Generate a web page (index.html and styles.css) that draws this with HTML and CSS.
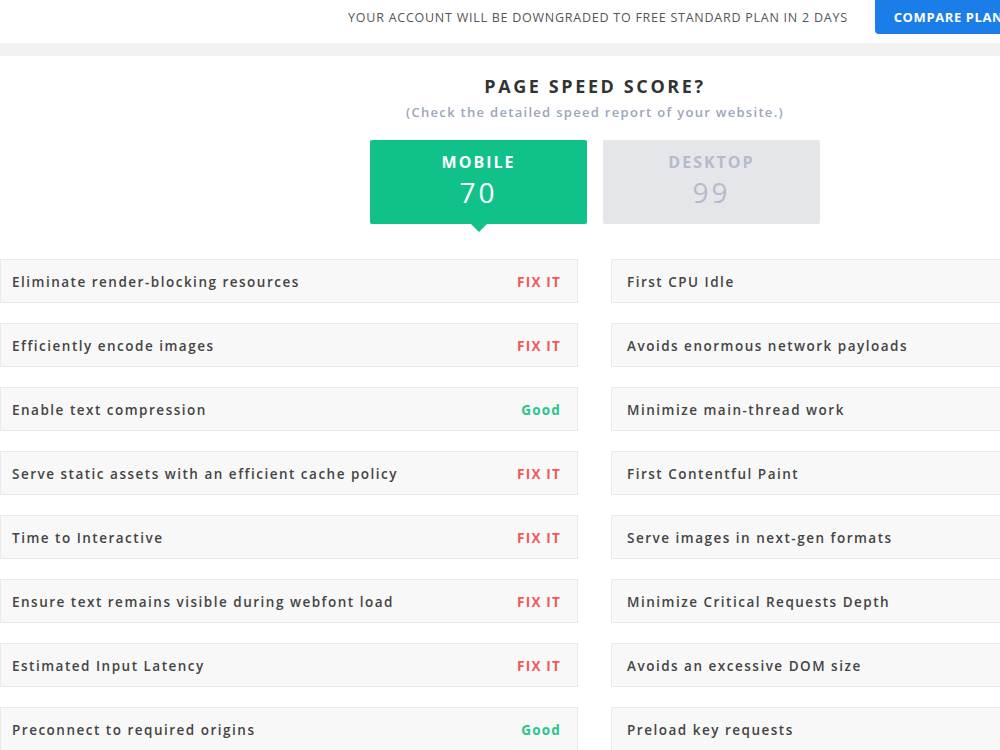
FILE: index.html
```html
<!DOCTYPE html>
<html>
<head>
    <title>Page Speed Score</title>
    <link rel="stylesheet" href="styles.css">
</head>
<body>
    <div class="page">
        <div class="topbar">
            <span class="notice">Your account will be downgraded to free standard plan in 2 days</span>
            <button class="compare-btn">Compare Plans</button>
        </div>

        <div class="panel">
            <h1>Page Speed Score?</h1>
            <p class="subtitle">(Check the detailed speed report of your website.)</p>

            <div class="tabs">
                <div class="tab active">
                    <span class="tab-name">Mobile</span>
                    <span class="tab-score">70</span>
                </div>
                <div class="tab">
                    <span class="tab-name">Desktop</span>
                    <span class="tab-score">99</span>
                </div>
            </div>

            <div class="audits">
                <div class="audit"><span>Eliminate render-blocking resources</span><span class="fix">FIX IT</span></div>
                <div class="audit"><span>First CPU Idle</span></div>
                <div class="audit"><span>Efficiently encode images</span><span class="fix">FIX IT</span></div>
                <div class="audit"><span>Avoids enormous network payloads</span></div>
                <div class="audit"><span>Enable text compression</span><span class="good">Good</span></div>
                <div class="audit"><span>Minimize main-thread work</span></div>
                <div class="audit"><span>Serve static assets with an efficient cache policy</span><span class="fix">FIX IT</span></div>
                <div class="audit"><span>First Contentful Paint</span></div>
                <div class="audit"><span>Time to Interactive</span><span class="fix">FIX IT</span></div>
                <div class="audit"><span>Serve images in next-gen formats</span></div>
                <div class="audit"><span>Ensure text remains visible during webfont load</span><span class="fix">FIX IT</span></div>
                <div class="audit"><span>Minimize Critical Requests Depth</span></div>
                <div class="audit"><span>Estimated Input Latency</span><span class="fix">FIX IT</span></div>
                <div class="audit"><span>Avoids an excessive DOM size</span></div>
                <div class="audit"><span>Preconnect to required origins</span><span class="good">Good</span></div>
                <div class="audit"><span>Preload key requests</span></div>
            </div>
        </div>
    </div>
</body>
</html>
```

FILE: styles.css
```css
body {
    margin: 0;
    padding: 0;
    font-family: "Open Sans", Arial, sans-serif;
    background: #f2f2f2;
    overflow: hidden;
}

.page {
    width: 1190px;
}

.topbar {
    height: 43px;
    background: white;
    display: flex;
    justify-content: flex-end;
    align-items: flex-start;
    gap: 27px;
    padding-right: 160px;
}

.notice {
    margin-top: 9px;
    font-size: 12.5px;
    font-weight: 400;
    text-transform: uppercase;
    color: #555;
    letter-spacing: 0.75px;
}

.compare-btn {
    height: 34px;
    padding: 0 19px;
    background: #1a7de8;
    color: white;
    border: none;
    border-radius: 0 0 4px 4px;
    font-family: inherit;
    font-size: 13px;
    font-weight: 700;
    text-transform: uppercase;
    letter-spacing: 0.6px;
}

.panel {
    margin-top: 13px;
    background: white;
    padding: 18px 0 0;
    height: 700px;
}

h1 {
    margin: 0;
    text-align: center;
    font-size: 18px;
    font-weight: 700;
    text-transform: uppercase;
    letter-spacing: 2.6px;
    color: #333;
}

.subtitle {
    margin: 5px 0 0;
    text-align: center;
    font-size: 13px;
    font-weight: 600;
    color: #9ba6ba;
    letter-spacing: 1.3px;
}

.tabs {
    display: flex;
    justify-content: center;
    gap: 16px;
    margin-top: 19px;
}

.tab {
    position: relative;
    width: 217px;
    height: 84px;
    border-radius: 2px;
    background: #e4e6ea;
    color: #b5bbca;
    display: flex;
    flex-direction: column;
    align-items: center;
    justify-content: center;
    padding-bottom: 2px;
    box-sizing: border-box;
}

.tab.active {
    background: #10c28a;
    color: white;
}

.tab.active::after {
    content: "";
    position: absolute;
    bottom: -8px;
    left: 50%;
    margin-left: -8px;
    border-left: 8px solid transparent;
    border-right: 8px solid transparent;
    border-top: 8px solid #10c28a;
}

.tab-name {
    font-size: 16px;
    font-weight: 700;
    text-transform: uppercase;
    letter-spacing: 2px;
    line-height: 22px;
}

.tab-score {
    font-size: 28px;
    font-weight: 400;
    line-height: 38px;
    letter-spacing: 3px;
}

.audits {
    display: grid;
    grid-template-columns: 578px 578px;
    column-gap: 33px;
    row-gap: 20px;
    margin-top: 35px;
}

.audit {
    height: 44px;
    box-sizing: border-box;
    background: #f8f8f8;
    border: 1px solid #e9e9e9;
    display: flex;
    justify-content: space-between;
    align-items: center;
    padding: 2px 16px 0 11px;
    font-size: 13.5px;
    font-weight: 600;
    color: #444;
    letter-spacing: 1.5px;
}

.audit:nth-child(even) {
    padding-left: 15px;
}

.fix {
    color: #f05a5a;
    font-weight: 700;
    letter-spacing: 1.2px;
}

.good {
    color: #2bc48e;
    font-weight: 700;
    letter-spacing: 1.2px;
}
```
